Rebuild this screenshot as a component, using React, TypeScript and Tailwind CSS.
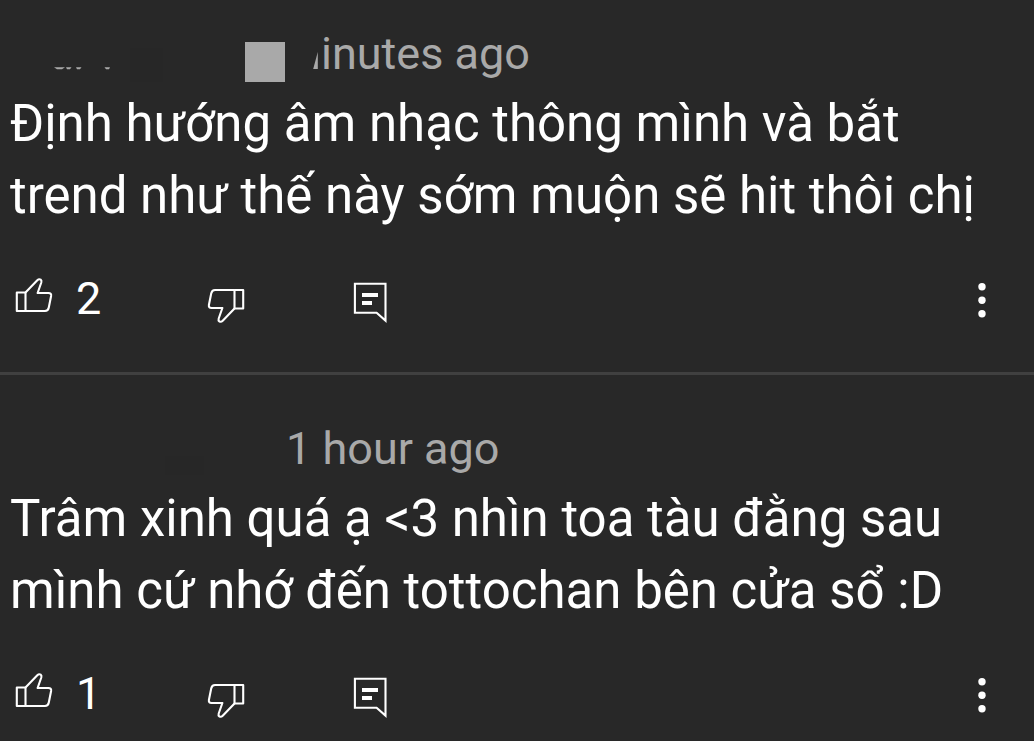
import type { ReactNode } from "react";

function ThumbPaths() {
  return (
    <>
      <path d="M2.8 21.5H11.5V40H2.8Z" />
      <path d="M11.5 21.5L23.3 9.2Q25 7.6 26.7 8.6Q27.9 9.5 27.3 11.5L23.6 22H34.4Q37.6 22 37.1 25L34.8 36.5Q34.1 40 31 40H11.5" />
    </>
  );
}

function LikeIcon() {
  return (
    <svg className="h-14 w-10" viewBox="0 0 40 56" fill="none" stroke="currentColor" strokeWidth="2.1" strokeLinejoin="round" aria-hidden="true">
      <ThumbPaths />
    </svg>
  );
}

function DislikeIcon() {
  return (
    <svg className="h-14 w-10" viewBox="0 0 40 56" fill="none" stroke="currentColor" strokeWidth="2.1" strokeLinejoin="round" aria-hidden="true">
      <g transform="translate(40 59) rotate(180)">
        <ThumbPaths />
      </g>
    </svg>
  );
}

function ReplyIcon() {
  return (
    <svg className="h-14 w-10" viewBox="0 0 40 56" fill="none" aria-hidden="true">
      <path d="M4.9 12.8H35.5V49.6L26.6 41.8H4.9Z" stroke="currentColor" strokeWidth="2.1" />
      <path d="M12 22H28V26H12ZM12 30H22V34H12Z" fill="currentColor" />
    </svg>
  );
}

function MoreIcon() {
  return (
    <svg className="h-14 w-10" viewBox="0 0 40 56" fill="currentColor" aria-hidden="true">
      <circle cx="20" cy="15.8" r="3.7" />
      <circle cx="20" cy="29.2" r="3.7" />
      <circle cx="20" cy="42.7" r="3.7" />
    </svg>
  );
}

function Comment({ meta, text, likes }: { meta: ReactNode; text: string; likes: number }) {
  return (
    <article>
      <header className="flex h-14 items-end text-[45px] leading-14 text-[#a9a9a9]">{meta}</header>
      <p className="mt-1.5 pr-8 pl-2.5 text-[51px] leading-[72px]">{text}</p>
      <div className="mt-[39px] flex items-center pr-8 pl-3.5">
        <div className="flex w-48 shrink-0">
          <button type="button" aria-label="Like" className="flex items-center gap-[22px] text-[45px] leading-14">
            <LikeIcon />
            <span>{likes}</span>
          </button>
        </div>
        <div className="flex w-36 shrink-0">
          <button type="button" aria-label="Dislike">
            <DislikeIcon />
          </button>
        </div>
        <button type="button" aria-label="Reply">
          <ReplyIcon />
        </button>
        <button type="button" aria-label="More options" className="ml-auto">
          <MoreIcon />
        </button>
      </div>
    </article>
  );
}

export default function App() {
  return (
    <main className="min-h-screen bg-[#282828] font-['Roboto',sans-serif] text-white">
      <section className="border-b-[3px] border-[#404040] pt-[26px] pb-[45px]">
        <Comment
          meta={
            <>
              <svg className="h-14 w-[245px] shrink-0" viewBox="0 0 245 56" aria-hidden="true">
                <rect x="130" y="22" width="33" height="34" fill="#272727" />
                <path d="M54 41.2H65L62 43.2H57ZM66 41.2H71.5L70 43.2H67ZM76 41.2H81.5L80 43.2H77ZM104.5 41.2H110L109 43.2H106Z" fill="#a9a9a9" />
              </svg>
              <span className="size-10 shrink-0 bg-[#a9a9a9]" />
              <svg className="ml-7 h-14 w-2 shrink-0" viewBox="0 0 8 56" aria-hidden="true">
                <path d="M4.8 26V43H0.2Z" fill="#a9a9a9" />
              </svg>
              <span>inutes ago</span>
            </>
          }
          text="Định hướng âm nhạc thông mình và bắt trend như thế này sớm muộn sẽ hit thôi chị"
          likes={2}
        />
      </section>
      <section className="pt-[46px]">
        <Comment
          meta={
            <>
              <svg className="h-14 w-[286px] shrink-0" viewBox="0 0 286 56" aria-hidden="true">
                <rect x="165" y="35" width="39" height="19" fill="#272727" />
              </svg>
              <span>1 hour ago</span>
            </>
          }
          text="Trâm xinh quá ạ <3 nhìn toa tàu đằng sau mình cứ nhớ đến tottochan bên cửa sổ :D"
          likes={1}
        />
      </section>
    </main>
  );
}
